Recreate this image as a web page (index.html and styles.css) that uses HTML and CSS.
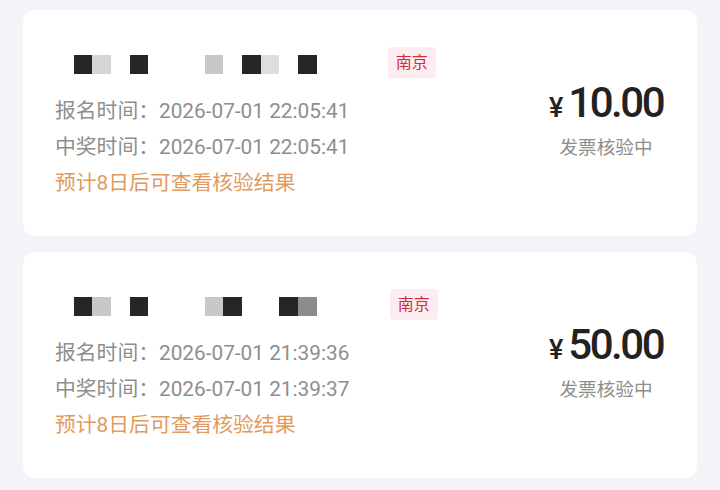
FILE: index.html
```html
<!DOCTYPE html>
<html lang="zh">
<head>
  <meta charset="UTF-8" />
  <meta name="viewport" content="width=device-width, initial-scale=1.0" />
  <title>中奖记录</title>
  <link rel="stylesheet" href="styles.css">
</head>
<body>
  <div class="list">
    <div class="card">
      <div class="info">
        <div class="name-row">
          <div class="mosaic">
            <i></i><i class="d"></i><i class="l1"></i><i></i><i class="d"></i><i></i><i></i><i></i><i class="l2"></i><i></i><i class="d"></i><i class="l3"></i><i></i><i class="d"></i>
          </div>
          <span class="tag">南京</span>
        </div>
        <p class="line">报名时间：2026-07-01 22:05:41</p>
        <p class="line">中奖时间：2026-07-01 22:05:41</p>
        <p class="line tip">预计8日后可查看核验结果</p>
      </div>
      <div class="amount-box">
        <div class="amount"><span class="yen">¥</span>10.00</div>
        <div class="status">发票核验中</div>
      </div>
    </div>

    <div class="card">
      <div class="info">
        <div class="name-row">
          <div class="mosaic">
            <i></i><i class="d"></i><i class="l2"></i><i></i><i class="d"></i><i></i><i></i><i></i><i class="l2"></i><i class="d"></i><i></i><i></i><i class="d"></i><i class="m"></i>
          </div>
          <span class="tag tag-b">南京</span>
        </div>
        <p class="line">报名时间：2026-07-01 21:39:36</p>
        <p class="line">中奖时间：2026-07-01 21:39:37</p>
        <p class="line tip">预计8日后可查看核验结果</p>
      </div>
      <div class="amount-box">
        <div class="amount"><span class="yen">¥</span>50.00</div>
        <div class="status">发票核验中</div>
      </div>
    </div>
  </div>
</body>
</html>
```

FILE: styles.css
```css
body {
  margin: 0;
  background-color: #f4f4f8;
  font-family: Roboto, "Noto Sans CJK SC", sans-serif;
  color: #222;
}
.list {
  padding: 10px 23px;
  display: flex;
  flex-direction: column;
  gap: 16px;
}
.card {
  background: #fff;
  border-radius: 12px;
  height: 226px;
  box-sizing: border-box;
  padding: 0 26px 0 32px;
  display: flex;
  align-items: center;
  justify-content: space-between;
}
.info {
  padding-top: 2px;
}
.name-row {
  display: flex;
  align-items: center;
  height: 31px;
  margin-bottom: 15px;
}
.mosaic {
  display: grid;
  grid-template-columns: repeat(14, 18.7px);
  height: 19px;
  margin-top: 4px;
}
.mosaic i.d { background: #262626; }
.mosaic i.l1 { background: #d6d6d6; }
.mosaic i.l2 { background: #c8c8c8; }
.mosaic i.l3 { background: #dedede; }
.mosaic i.m { background: #8c8c8c; }
.tag {
  margin-left: 71px;
  background: #fdedf0;
  color: #d42a3f;
  font-size: 16px;
  line-height: 31px;
  padding: 0 8px;
  border-radius: 4px;
}
.tag-b {
  margin-left: 73px;
}
.line {
  margin: 0;
  font-size: 20.8px;
  line-height: 36px;
  color: #8e8e8e;
}
.tip {
  color: #e19a5e;
}
.amount-box {
  width: 130px;
  text-align: center;
  padding-bottom: 6px;
}
.amount {
  font-size: 42px;
  font-weight: 500;
  line-height: 50px;
  letter-spacing: -2.5px;
  color: #222;
}
.yen {
  font-size: 27px;
  font-weight: 500;
  margin-right: 5px;
  letter-spacing: 0;
}
.status {
  margin-top: 1px;
  font-size: 18.6px;
  color: #8e8e8e;
  line-height: 28px;
}
```
